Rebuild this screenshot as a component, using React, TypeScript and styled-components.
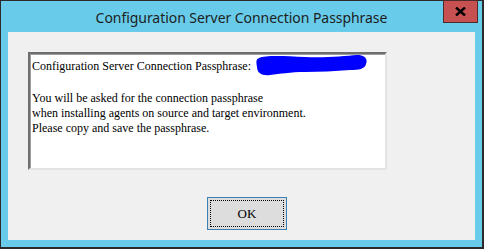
import React from "react";
import styled, { createGlobalStyle } from "styled-components";

const Global = createGlobalStyle`
  html, body { margin: 0; padding: 0; background: #2b2b2b; }
  #root { width: 484px; height: 249px; }
`;

const Window = styled.div`
  box-sizing: border-box;
  width: 484px;
  height: 249px;
  display: flex;
  flex-direction: column;
  background: #68cbe9;
  border-style: solid;
  border-color: #2b2b2b;
  border-width: 1px 2px 2px 1px;
`;

const TitleBar = styled.div`
  height: 31px;
  display: grid;
  grid-template-columns: 1fr auto 1fr;
  align-items: center;
  flex: none;
`;

const Title = styled.div`
  grid-column: 2;
  font-family: "Noto Sans", "Open Sans", sans-serif;
  font-size: 14px;
  color: #1d1d1d;
  white-space: nowrap;
  letter-spacing: -0.05px;
  padding-top: 1px;
`;

const CloseButton = styled.div`
  grid-column: 3;
  justify-self: end;
  align-self: start;
  margin-right: 4px;
  margin-top: -1px;
  box-sizing: border-box;
  width: 35px;
  height: 23px;
  background: #c75050;
  border: 1px solid #4d2b2b;
  display: flex;
  align-items: center;
  justify-content: center;
`;

const Panel = styled.div`
  flex: 1;
  margin: 0 7px 7px 7px;
  background: #f0f0f0;
  display: flex;
  flex-direction: column;
  padding: 20px 0 0 20px;
`;

const TextBox = styled.div`
  box-sizing: border-box;
  width: 359px;
  height: 118px;
  background: #ffffff;
  border-style: solid;
  border-width: 2px 2px 2px 2px;
  border-color: #6e6e6e #e3e3e3 #e3e3e3 #6e6e6e;
  box-shadow: inset 1px 1px 0 #a0a0a0;
  padding: 1px 0 0 2px;
  font-family: "Liberation Serif", "Times New Roman", serif;
  font-size: 12px;
  line-height: 15px;
  color: #000;
`;

const Line = styled.div`
  white-space: nowrap;
  min-height: 15px;
`;

const Scribble = styled.svg`
  display: inline-block;
  vertical-align: -6px;
  margin-left: 1px;
`;

const ButtonRow = styled.div`
  display: flex;
  padding-left: 179px;
  margin-top: 27px;
`;

const OkButton = styled.button`
  position: relative;
  box-sizing: border-box;
  width: 80px;
  height: 33px;
  background: #dddddd;
  border: 1px solid #3c7fb1;
  padding: 0;
  font-family: "Liberation Serif", "Times New Roman", serif;
  font-size: 13px;
  color: #000;
  &::after {
    content: "";
    position: absolute;
    inset: 2px;
    border: 1px dotted #000;
  }
`;

export default function App() {
  return (
    <>
      <Global />
      <Window>
        <TitleBar>
          <Title>Configuration Server Connection Passphrase</Title>
          <CloseButton>
            <svg width="11" height="9" viewBox="0 0 11 9">
              <path d="M1 0.5 L10 8.5 M10 0.5 L1 8.5" stroke="#000" strokeWidth="2.4" />
            </svg>
          </CloseButton>
        </TitleBar>
        <Panel>
          <TextBox>
            <Line>
              Configuration Server Connection Passphrase:{" "}
              <Scribble width="112" height="21" viewBox="0 0 112 21">
                <path
                  d="M4,3 C10,0 30,1 50,2 C70,3 90,1 102,0 C110,0 113,4 111,9 C110,14 104,15 95,15 C80,16 65,17 50,17 C35,17 25,19 15,20 C7,21 2,18 2,12 C1,7 1,4 4,3 Z"
                  fill="#0000ff"
                />
              </Scribble>
            </Line>
            <Line />
            <Line>You will be asked for the connection passphrase</Line>
            <Line>when installing agents on source and target environment.</Line>
            <Line>Please copy and save the passphrase.</Line>
          </TextBox>
          <ButtonRow>
            <OkButton>OK</OkButton>
          </ButtonRow>
        </Panel>
      </Window>
    </>
  );
}
